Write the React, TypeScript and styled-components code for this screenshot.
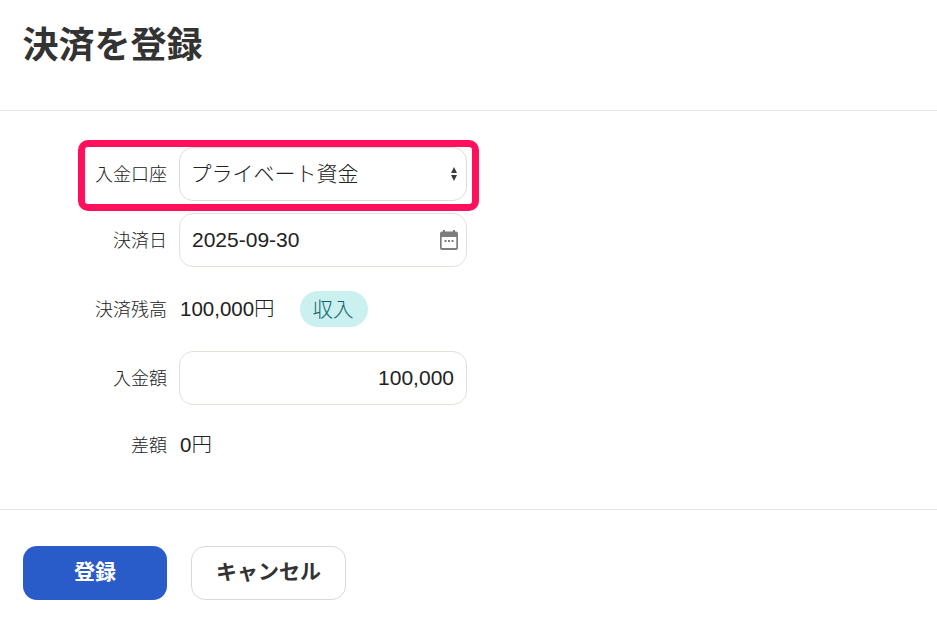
import styled, { createGlobalStyle } from "styled-components";

const GlobalStyle = createGlobalStyle`
  * { box-sizing: border-box; }
  html, body { margin: 0; background: #fff; }
  body {
    font-family: "Liberation Sans", "Noto Sans CJK JP", sans-serif;
    color: #333;
  }
`;

const Header = styled.header`
  height: 111px;
  padding: 23px 22.5px 0;
  border-bottom: 1px solid #e6e6e6;
`;

const Title = styled.h1`
  margin: 0;
  font-size: 36px;
  line-height: 46px;
  font-weight: 700;
  color: #333;
`;

const Form = styled.div`
  display: flex;
  flex-direction: column;
  gap: 12px;
  padding: 36px 0;
  border-bottom: 1px solid #e6e6e6;
`;

const Row = styled.div<{ $height: number }>`
  position: relative;
  display: flex;
  align-items: center;
  gap: 12px;
  width: 467px;
  height: ${(p) => p.$height}px;
`;

const Label = styled.label`
  width: 167px;
  flex: none;
  padding-top: 2px;
  text-align: right;
  font-size: 18px;
  line-height: 26px;
  font-weight: 300;
  color: #222;
`;

const Highlight = styled.div`
  position: absolute;
  left: 78px;
  right: -12px;
  top: -7px;
  bottom: -10px;
  border: 7px solid #ff0f5c;
  border-radius: 10px;
  pointer-events: none;
`;

const Field = styled.div<{ $border?: string }>`
  position: relative;
  width: 288px;
  height: 54px;
  display: flex;
  align-items: center;
  padding: 0 12px;
  background: #fff;
  border: 1px solid ${(p) => p.$border || "#e4e0d8"};
  border-radius: 14px;
`;

const FieldText = styled.span<{ $right?: boolean; $shift?: number }>`
  flex: 1;
  margin-left: ${(p) => p.$shift || 0}px;
  font-size: 21px;
  line-height: 28px;
  font-weight: 300;
  color: #222;
  text-align: ${(p) => (p.$right ? "right" : "left")};
`;

const FieldIcon = styled.svg`
  position: absolute;
  display: block;
`;

const Value = styled.span`
  margin-left: 1px;
  font-size: 20.5px;
  line-height: 28px;
  font-weight: 300;
  color: #222;
`;

const Badge = styled.span`
  display: inline-flex;
  align-items: center;
  justify-content: center;
  width: 68px;
  height: 36px;
  margin-left: 13px;
  padding: 0 1px 3px 0;
  border-radius: 18px;
  background: #cbf0f0;
  color: #14636a;
  font-size: 20.5px;
  font-weight: 300;
`;

const Footer = styled.footer`
  display: flex;
  gap: 24px;
  padding: 36px 23px 0;
`;

const Button = styled.button<{ $primary?: boolean }>`
  height: 54px;
  width: ${(p) => (p.$primary ? 144 : 155)}px;
  padding: 0 0 6px;
  font-family: inherit;
  font-size: 21px;
  font-weight: 700;
  border-radius: 14px;
  color: ${(p) => (p.$primary ? "#fff" : "#333")};
  background: ${(p) => (p.$primary ? "#2a5cc9" : "#fff")};
  border: ${(p) => (p.$primary ? "none" : "1px solid #d9d9d9")};
`;

const SelectArrows = () => (
  <FieldIcon
    width="6"
    height="14"
    viewBox="0 0 6 14"
    style={{ right: 9, top: 19 }}
    aria-hidden
  >
    <path d="M3 0 L6 6 H0 Z M0 8 H6 L3 14 Z" fill="#3a3a3a" />
  </FieldIcon>
);

const CalendarIcon = () => (
  <FieldIcon
    width="18"
    height="20"
    viewBox="0 0 18 20"
    style={{ right: 8, top: 16 }}
    aria-hidden
  >
    <path
      d="M3 0h2v1.500h8V0h2v1.500h1a2 2 0 0 1 2 2V18a2 2 0 0 1-2 2H2a2 2 0 0 1-2-2V3.500a2 2 0 0 1 2-2h1Z"
      fill="#7d7d7d"
    />
    <rect x="1.700" y="7" width="14.600" height="11" fill="#fff" />
    <path d="M4.500 10h2v2h-2Zm3.500 0h2v2H8Zm3.500 0h2v2h-2Z" fill="#7d7d7d" />
  </FieldIcon>
);

export default function App() {
  return (
    <>
      <GlobalStyle />
      <Header>
        <Title>決済を登録</Title>
      </Header>
      <Form>
        <Row $height={54}>
          <Label>入金口座</Label>
          <Field $border="#dcdcdc">
            <FieldText $shift={-1.5}>プライベート資金</FieldText>
            <SelectArrows />
          </Field>
          <Highlight />
        </Row>
        <Row $height={54}>
          <Label>決済日</Label>
          <Field>
            <FieldText>2025-09-30</FieldText>
            <CalendarIcon />
          </Field>
        </Row>
        <Row $height={60}>
          <Label>決済残高</Label>
          <Value>100,000円</Value>
          <Badge>収入</Badge>
        </Row>
        <Row $height={54}>
          <Label>入金額</Label>
          <Field>
            <FieldText $right>100,000</FieldText>
          </Field>
        </Row>
        <Row $height={56}>
          <Label>差額</Label>
          <Value>0円</Value>
        </Row>
      </Form>
      <Footer>
        <Button $primary>登録</Button>
        <Button>キャンセル</Button>
      </Footer>
    </>
  );
}
